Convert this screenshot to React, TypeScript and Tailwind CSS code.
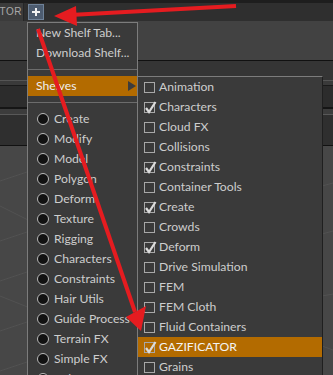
const shelves = [
  "Create",
  "Modify",
  "Model",
  "Polygon",
  "Deform",
  "Texture",
  "Rigging",
  "Characters",
  "Constraints",
  "Hair Utils",
  "Guide Process",
  "Terrain FX",
  "Simple FX",
  "Volume",
];

const tabs = [
  { name: "Animation", on: false },
  { name: "Characters", on: true },
  { name: "Cloud FX", on: false },
  { name: "Collisions", on: false },
  { name: "Constraints", on: true },
  { name: "Container Tools", on: false },
  { name: "Create", on: true },
  { name: "Crowds", on: false },
  { name: "Deform", on: true },
  { name: "Drive Simulation", on: false },
  { name: "FEM", on: false },
  { name: "FEM Cloth", on: false },
  { name: "Fluid Containers", on: false },
  { name: "GAZIFICATOR", on: true, active: true },
  { name: "Grains", on: false },
];

function CheckBox({ on }: { on: boolean }) {
  return (
    <div className="relative w-[11px] h-[11px] border border-[#a8a8a8] shrink-0">
      {on && (
        <svg className="absolute -left-[1px] -top-[3px]" width="14" height="14" viewBox="0 0 14 14">
          <path d="M2 8 L5 12 L11.5 2" fill="none" stroke="#dcdcdc" strokeWidth="2.2" />
        </svg>
      )}
    </div>
  );
}

function Separator() {
  return <div className="my-[6px] h-px bg-[#6c6c6c]" />;
}

export default function App() {
  return (
    <div className="relative w-[333px] h-[375px] overflow-hidden bg-[#474747] font-['Lato',sans-serif] text-[12.2px] text-[#cdcdcd]">
      {/* Background panes */}
      <div className="flex flex-col h-full">
        <div className="h-[3px] bg-[#1e1e1e]" />
        <div className="h-[18px] bg-[#2f2f2f] flex items-stretch">
          <div className="w-[24px] bg-[#3b3b3b] border-r border-[#262626] flex items-center justify-end pr-[1px] text-[10px] leading-none text-[#a9a9a9] tracking-[0.5px] font-['Liberation_Sans',sans-serif]">
            TOR
          </div>
          <div className="ml-[4px] mt-[1px] w-[16px] h-[16px] bg-[#4d5c70] border border-[#6f8298] flex items-center justify-center">
            <svg width="10" height="10" viewBox="0 0 10 10">
              <path d="M5 1 V9 M1 5 H9" stroke="#f2f2f2" strokeWidth="2" />
            </svg>
          </div>
        </div>
        <div className="h-[39px] bg-[#424242]" />
        <div className="h-px bg-[#111]" />
        <div className="h-[19px] bg-[#353535]" />
        <div className="h-px bg-[#555]" />
        <div className="h-[4px] bg-[#3a3a3a]" />
        <div className="h-px bg-[#1a1a1a]" />
        <div className="h-[21px] bg-[#2c2c2c]" />
        <div className="h-[2px] bg-[#151515]" />
        <div className="h-[5px] bg-[#3c3c3c]" />
        <div className="h-px bg-[#585858]" />
        <div className="h-[30px] bg-[#2f2f2f]" />
        <div className="h-px bg-[#111]" />
        <div className="relative flex-1 bg-[#474747]">
          <svg className="absolute inset-0" width="333" height="230">
            <g stroke="#525252" strokeWidth="1">
              <line x1="0" y1="35" x2="30" y2="25" />
              <line x1="0" y1="60" x2="30" y2="75" />
              <line x1="0" y1="95" x2="30" y2="85" />
              <line x1="0" y1="135" x2="30" y2="125" />
              <line x1="0" y1="150" x2="30" y2="162" />
              <line x1="0" y1="185" x2="30" y2="175" />
              <line x1="0" y1="225" x2="30" y2="215" />
              <line x1="322" y1="40" x2="333" y2="37" />
              <line x1="322" y1="88" x2="333" y2="85" />
              <line x1="322" y1="150" x2="333" y2="148" />
              <line x1="322" y1="200" x2="333" y2="204" />
            </g>
          </svg>
        </div>
      </div>

      {/* Main dropdown menu */}
      <div className="absolute left-[27px] top-[22px] bottom-0 w-[111px] bg-[#3a3a3a] border-l border-t border-r border-[#7c7c7c]">
        <div className="h-5 flex items-center pl-2">New Shelf Tab...</div>
        <div className="h-5 flex items-center pl-2">Download Shelf...</div>
        <Separator />
        <div className="h-5 flex items-center justify-between pl-2 pr-[1px] bg-[#b36b00] text-[#f0f0f0]">
          <span>Shelves</span>
          <svg width="8" height="10" viewBox="0 0 8 10">
            <path d="M0 0 L8 5 L0 10 Z" fill="#3c3c3c" />
          </svg>
        </div>
        <Separator />
        {shelves.map((s) => (
          <div key={s} className="h-5 flex items-center gap-[5px] pl-[9px] whitespace-nowrap">
            <div className="w-[12px] h-[12px] rounded-full bg-[#121212] border border-[#b9b9b9] shrink-0" />
            <span>{s}</span>
          </div>
        ))}
      </div>

      {/* Shelves submenu */}
      <div className="absolute left-[137px] top-[76px] bottom-0 w-[186px] bg-[#3a3a3a] border-l border-t border-r border-l-[#7c7c7c] border-t-[#7c7c7c] border-r-[#1f1f1f]">
        {tabs.map((t) => (
          <div
            key={t.name}
            className={
              t.active
                ? "h-5 flex items-center gap-[4px] pl-[6px] bg-[#b36b00] text-[#f4f4f4]"
                : "h-5 flex items-center gap-[4px] pl-[6px]"
            }
          >
            <CheckBox on={t.on} />
            <span>{t.name}</span>
          </div>
        ))}
      </div>

      {/* Red annotation arrows */}
      <svg className="absolute inset-0 pointer-events-none" width="333" height="375">
        <line x1="236" y1="6" x2="70" y2="15" stroke="#e51c20" strokeWidth="4" />
        <polygon points="54,16 76,6 77,26" fill="#e51c20" />
        <line x1="38" y1="29" x2="135" y2="312" stroke="#e51c20" strokeWidth="4" />
        <polygon points="141,331 126,317 146,306" fill="#e51c20" />
      </svg>
    </div>
  );
}
